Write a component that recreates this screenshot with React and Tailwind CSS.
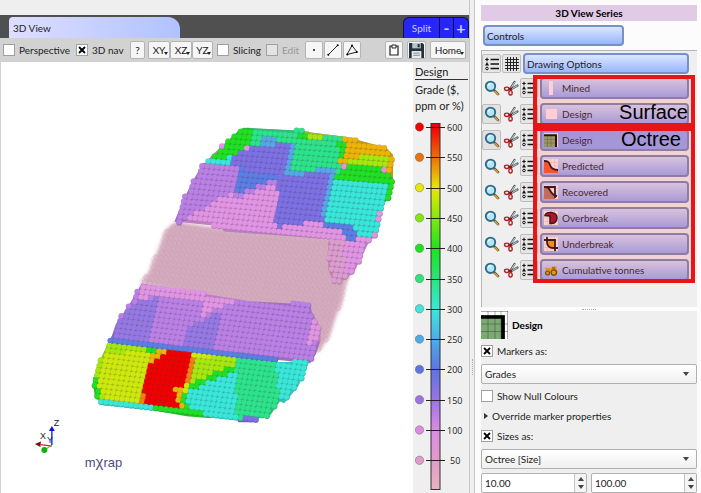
import React, { useState } from 'react';

const COLORS = {
    red: '#f00000',
    orange: '#f08010',
    gold: '#ecb408',
    yellow: '#cde80c',
    lime: '#a6e80e',
    green: '#20e024',
    mint: '#2ce38c',
    teal: '#38e6da',
    sky: '#56a6e8',
    blue: '#5c7ee4',
    indigo: '#7d70e4',
    violet: '#9678e4',
    purple: '#ba80e6',
    pink: '#e294e4',
    rose: '#dc9ccf',
};

// Painted in order: the last region that holds a marker gives its colour
const REGIONS = [
    // upper block
    ['pink', [[174, 222], [183, 200], [193, 180], [205, 163], [212, 155], [228, 140], [243, 128], [297, 131], [345, 137], [386, 148], [392, 155], [393, 178], [388, 198], [381, 206], [378, 224], [376, 236], [369, 242], [322, 239], [223, 232], [222, 227]]],
    ['rose', [[328, 242], [357, 240], [370, 240], [365, 250], [354, 272], [345, 280], [334, 284], [328, 270]]],
    ['pink', [[345, 240], [370, 240], [365, 250], [354, 272], [345, 277]]],
    ['purple', [[203, 163], [238, 167], [233, 193], [215, 200], [205, 208], [180, 224], [174, 222], [183, 200], [193, 180]]],
    ['purple', [[235, 180], [278, 176], [276, 185], [245, 196], [232, 198]]],
    ['indigo', [[223, 163], [253, 145], [277, 140], [293, 143], [285, 174], [250, 171], [223, 166]]],
    ['blue', [[237, 169], [277, 174], [276, 180], [250, 188], [235, 195]]],
    ['indigo', [[278, 177], [307, 171], [334, 172], [323, 223], [292, 224], [275, 232]]],
    ['mint', [[247, 128], [303, 131], [302, 143], [272, 141], [254, 146], [247, 146]]],
    ['sky', [[262, 139], [277, 140], [275, 145], [255, 149]]],
    ['mint', [[297, 132], [343, 138], [341, 173], [286, 172], [294, 143]]],
    ['sky', [[290, 142], [296, 143], [290, 173], [283, 173]]],
    ['sky', [[283, 169], [306, 170], [306, 176], [283, 175]]],
    ['sky', [[316, 166], [338, 167], [338, 180], [328, 222], [322, 222], [330, 174], [316, 172]]],
    ['teal', [[206, 161], [222, 154], [235, 154], [230, 164], [210, 167]]],
    ['green', [[247, 128], [253, 130], [250, 143], [238, 154], [213, 161], [212, 158], [228, 141], [240, 129]]],
    ['green', [[298, 131], [309, 132], [306, 142], [300, 139]]],
    ['lime', [[303, 132], [345, 137], [350, 140], [306, 137]]],
    ['gold', [[345, 137], [386, 148], [393, 155], [393, 178], [386, 178], [384, 164], [370, 160], [340, 168], [341, 146]]],
    ['green', [[339, 142], [346, 141], [342, 158], [337, 156]]],
    ['lime', [[349, 161], [366, 156], [388, 158], [388, 166], [350, 167]]],
    ['green', [[335, 180], [340, 169], [362, 163], [380, 166], [386, 174], [393, 178], [389, 198], [382, 206], [384, 182]]],
    ['teal', [[335, 179], [388, 182], [383, 200], [378, 220], [376, 234], [362, 241], [352, 224], [326, 221]]],
    ['blue', [[325, 222], [350, 224], [358, 239], [347, 241], [344, 231], [325, 228]]],
    // lower purple block
    ['purple', [[141, 284], [168, 290], [250, 302], [310, 305], [314, 324], [320, 328], [320, 342], [316, 354], [310, 364], [109, 343], [115, 325], [128, 306]]],
    ['pink', [[141, 284], [245, 301], [215, 309], [203, 319], [203, 305], [165, 297], [150, 298], [135, 302]]],
    ['violet', [[132, 305], [160, 298], [150, 345], [109, 341], [117, 325]]],
    ['violet', [[186, 330], [222, 312], [215, 350], [184, 346]]],
    ['pink', [[312, 312], [320, 328], [320, 342], [309, 346]]],
    ['blue', [[110, 339], [152, 343], [192, 349], [275, 357], [276, 363], [225, 360], [160, 352], [108, 346]]],
    // toe of the block
    ['yellow', [[107, 345], [153, 350], [196, 356], [240, 361], [240, 380], [190, 415], [150, 409], [105, 405], [96, 400], [93, 390], [95, 370]]],
    ['lime', [[107, 345], [153, 350], [150, 356], [107, 352], [100, 366], [97, 385], [104, 399], [145, 404], [145, 409], [105, 406], [95, 396], [96, 368]]],
    ['green', [[92, 378], [97, 378], [99, 401], [94, 397]]],
    ['gold', [[150, 350], [168, 351], [160, 361], [148, 363]]],
    ['green', [[148, 350], [155, 351], [152, 357], [147, 356]]],
    ['orange', [[147, 362], [153, 362], [148, 408], [140, 406]]],
    ['red', [[165, 351], [192, 355], [189, 378], [182, 386], [174, 391], [178, 404], [189, 414], [146, 406], [143, 394], [149, 366], [162, 358]]],
    ['orange', [[190, 356], [197, 357], [192, 382], [182, 390], [185, 376]]],
    ['gold', [[173, 391], [184, 387], [183, 402], [187, 414], [178, 407]]],
    ['lime', [[196, 357], [240, 361], [234, 370], [210, 380], [188, 390]]],
    ['teal', [[240, 366], [208, 377], [187, 390], [185, 410], [195, 417], [237, 421], [242, 400]]],
    ['green', [[240, 363], [238, 371], [212, 382], [188, 392], [187, 386], [213, 375]]],
    ['green', [[184, 393], [189, 390], [187, 410], [182, 404]]],
    ['mint', [[238, 360], [277, 364], [281, 400], [270, 416], [252, 421], [236, 421], [236, 372]]],
    ['teal', [[276, 363], [309, 362], [298, 387], [284, 404], [279, 402]]],
    ['teal', [[98, 402], [152, 407], [152, 411], [102, 406]]],
    ['green', [[152, 408], [188, 412], [211, 416], [210, 419], [186, 417], [152, 411]]],
    ['indigo', [[236, 419], [258, 419], [254, 423], [238, 423]]],
];

const MIST = [[166, 230], [176, 222], [223, 230], [330, 238], [350, 243], [352, 272], [345, 284], [342, 300], [328, 338], [317, 354], [308, 308], [250, 306], [140, 284], [149, 272]];

function inside(px, py, pts) {
    let hit = false;
    for (let i = 0, j = pts.length - 1; i < pts.length; j = i++) {
        const [xi, yi] = pts[i];
        const [xj, yj] = pts[j];
        if (yi > py !== yj > py && px < ((xj - xi) * (py - yi)) / (yj - yi) + xi) hit = !hit;
    }
    return hit;
}

const toPoints = (pts) => pts.map((p) => p.join(',')).join(' ');

const MARKERS = [];
const MIST_MARKERS = [];
for (let row = 0; row < 76; row++) {
    const slope = 0.07 + 0.045 * Math.min(1, row / 40);
    for (let col = 0; col < 110; col++) {
        const x = 80 + col * 5 - row * 1.2;
        const y = 100 + row * 5.2 + (x - 90) * slope;
        let color = null;
        REGIONS.forEach(([name, pts]) => {
            if (inside(x, y, pts)) color = name;
        });
        if (color) MARKERS.push({ x, y, color });
        if (inside(x, y, MIST)) MIST_MARKERS.push({ x, y });
    }
}

const LEGEND = [
    [600, '#ee0505'],
    [550, '#ee7008'],
    [500, '#e8e808'],
    [450, '#84e80c'],
    [400, '#1ce41c'],
    [350, '#2ae47c'],
    [300, '#3ce8dc'],
    [250, '#4cace8'],
    [200, '#5c74e4'],
    [150, '#9c74e4'],
    [100, '#dc8ce4'],
    [50, '#e09cc8'],
];

const SURFACES = [
    { name: 'Mined', icon: 'bar' },
    { name: 'Design', icon: 'square', zoomed: true },
];

const OCTREES = [
    { name: 'Design', icon: 'design', zoomed: true, active: true },
    { name: 'Predicted', icon: 'predicted' },
    { name: 'Recovered', icon: 'recovered' },
    { name: 'Overbreak', icon: 'overbreak' },
    { name: 'Underbreak', icon: 'underbreak' },
    { name: 'Cumulative tonnes', icon: 'truck' },
];

function Check({ label, checked = false, disabled = false, className = '' }) {
    const [on, setOn] = useState(checked);
    return (
        <label className={`flex items-center gap-1 whitespace-nowrap ${disabled ? 'text-[#999999]' : ''} ${className}`}>
            <span className="relative block h-3 w-3 shrink-0">
                <input
                    type="checkbox"
                    checked={on}
                    disabled={disabled}
                    onChange={() => setOn(!on)}
                    className="block h-3 w-3 appearance-none border border-[#a0a0a0] bg-white disabled:bg-[#e4e4e4]"
                />
                {on && (
                    <svg viewBox="0 0 12 12" className="pointer-events-none absolute inset-0 h-3 w-3">
                        <path d="M3 3l6 6M9 3l-6 6" stroke="#000" strokeWidth="1.8" />
                    </svg>
                )}
            </span>
            <span>{label}</span>
        </label>
    );
}

function ToolButton({ children, label, className = '' }) {
    return (
        <button
            type="button"
            aria-label={label}
            className={`relative flex h-[18px] shrink-0 items-center justify-center rounded-xs border border-[#b4b4b4] bg-[#f6f6f6] ${className}`}
        >
            {children}
        </button>
    );
}

function Caret() {
    return (
        <svg viewBox="0 0 4 3" className="absolute right-[1px] bottom-[3px] h-[3px] w-1">
            <path d="M0 0h4L2 3z" fill="#222" />
        </svg>
    );
}

function ListIcon() {
    return (
        <svg viewBox="0 0 14 14" className="h-[14px] w-[14px] shrink-0">
            <path d="M5.5 2.5H14M5.5 7H14M5.5 11.5H14" stroke="#111" strokeWidth="1.4" />
            <path d="M2 .8v3.4M.3 2.5h3.4" stroke="#111" strokeWidth="1.1" />
            <path d="M2 5l2 3.5H0z" fill="#111" />
            <circle cx="2" cy="11.5" r="1.3" fill="none" stroke="#111" />
        </svg>
    );
}

function Magnifier() {
    return (
        <svg viewBox="0 0 16 16" className="h-4 w-4">
            <path d="M10 10.2l4 4" stroke="#5d4a1e" strokeWidth="2.6" strokeLinecap="round" />
            <path d="M11 11.2l3 3" stroke="#dba445" strokeWidth="1.5" strokeLinecap="round" />
            <circle cx="6.5" cy="6.3" r="4.7" fill="#b5e6f5" stroke="#2d6a8c" strokeWidth="1.9" />
            <path d="M4 5.5a3 3 0 0 1 3-2" stroke="#fff" strokeWidth="1.2" fill="none" />
        </svg>
    );
}

function Scissors() {
    return (
        <svg viewBox="0 0 16 16" className="h-4 w-4">
            <path d="M7 9l4.500-7M7.500 9.500L14.500 5.500" stroke="#4b5960" strokeWidth="2.2" strokeLinecap="round" />
            <path d="M8 8l3.500-5.600M8.500 9L14 5.800" stroke="#c6d0d4" strokeWidth="1" strokeLinecap="round" />
            <ellipse cx="3.8" cy="8.8" rx="2.3" ry="1.7" fill="none" stroke="#b02024" strokeWidth="1.4" />
            <ellipse cx="7.5" cy="12.8" rx="1.7" ry="2.2" fill="none" stroke="#b02024" strokeWidth="1.4" />
            <path d="M5.5 9.3l2.8-.8-.6 2" stroke="#8a1619" strokeWidth="1.6" fill="none" />
        </svg>
    );
}

function SeriesIcon({ kind }) {
    if (kind === 'bar') {
        return (
            <svg viewBox="0 0 14 14" className="h-[14px] w-[14px]">
                <path d="M5 0h4v14H5z" fill="#ffe9f2" />
            </svg>
        );
    }
    if (kind === 'square') {
        return (
            <svg viewBox="0 0 14 14" className="h-[14px] w-[14px]">
                <path d="M2 2h11v10H2z" fill="#ffe9f2" />
            </svg>
        );
    }
    if (kind === 'truck') {
        return (
            <svg viewBox="0 0 14 14" className="h-[14px] w-[14px]">
                <path d="M1 4.500l6 1 1-2h4.500v3.500l1 1v2H3z" fill="#e3a300" />
                <path d="M8 5h3" stroke="#5a4420" strokeWidth="1" />
                <circle cx="3.5" cy="10" r="2" fill="#e3a300" stroke="#604010" strokeWidth="1.2" />
                <circle cx="9.8" cy="9.6" r="2.7" fill="#e3a300" stroke="#604010" strokeWidth="1.2" />
            </svg>
        );
    }
    return (
        <svg viewBox="0 0 14 14" className="h-[14px] w-[14px]">
            <path d="M0 0h14v14H0z" fill="#fff0e8" />
            <path d="M3.5 0v14M7 0v14M10.5 0v14M0 3.5h14M0 7h14M0 10.5h14" stroke="#e5c5c0" strokeWidth=".5" />
            {kind === 'design' && (
                <>
                    <path d="M0 3h11v11H0z" fill="#86a86a" />
                    <path d="M3.5 3v11M7 3v11M0 6.5h11M0 10h11" stroke="#4d6d40" strokeWidth=".6" />
                    <path d="M0 2.3h12V14" stroke="#000" strokeWidth="2" fill="none" />
                </>
            )}
            {kind === 'predicted' && (
                <>
                    <path d="M0 2c4 0 5 1 6 4s4 5 8 5v3H0z" fill="#ff5522" />
                    <path d="M0 2c4 0 5 1 6 4s4 5 8 5" stroke="#111" strokeWidth="1.8" fill="none" />
                </>
            )}
            {kind === 'recovered' && (
                <>
                    <path d="M0 2h3c2 0 2 2 3 4s2 4 5 5v3H0z" fill="#c07058" />
                    <path d="M0 2h11v11M2 2c5 0 3 8 11 9" stroke="#111" strokeWidth="1.8" fill="none" />
                </>
            )}
            {kind === 'overbreak' && (
                <path d="M1 4.500C2 0 13 0 13 7c0 4-3 6-7 5.500V5z" fill="#a40828" stroke="#111" strokeWidth="1.5" />
            )}
            {kind === 'underbreak' && (
                <>
                    <path d="M3 3h8v8H7L3 7z" fill="#f09a18" />
                    <path d="M0 3h11v11M3 0v5c0 4 3 6 6 6h5" stroke="#111" strokeWidth="1.8" fill="none" />
                </>
            )}
        </svg>
    );
}

function SeriesRow({ item }) {
    return (
        <div className="flex h-[26px] items-center pr-2">
            <button
                type="button"
                aria-label={`Zoom to ${item.name}`}
                className={`flex h-5 w-[19px] shrink-0 items-center justify-center rounded-xs border ${item.zoomed ? 'border-[#bcbcbc] bg-[#e2e2e2]' : 'border-transparent'}`}
            >
                <Magnifier />
            </button>
            <button type="button" aria-label={`Clip ${item.name}`} className="flex h-5 w-[19px] shrink-0 items-center justify-center">
                <Scissors />
            </button>
            <button
                type="button"
                aria-label={`Legend of ${item.name}`}
                className="mr-[2px] flex h-5 w-[18px] shrink-0 items-center justify-center rounded-xs border border-[#bcbcbc] bg-[#e6e6e6]"
            >
                <ListIcon />
            </button>
            <button
                type="button"
                className={`flex h-[22px] min-w-0 flex-1 items-center gap-1 rounded-sm border-2 border-[#7788b4] pl-[2px] ${item.active ? 'bg-[#90a8f6]' : 'bg-linear-to-b from-[#d2dcfa] to-[#96acf6]'}`}
            >
                <SeriesIcon kind={item.icon} />
                <span className="whitespace-nowrap">{item.name}</span>
            </button>
        </div>
    );
}

function SeriesGroup({ items, note }) {
    return (
        <div className="relative">
            {items.map((item) => (
                <SeriesRow key={item.name} item={item} />
            ))}
            <div className="pointer-events-none absolute inset-y-0 right-[2px] left-[51px] border-4 border-[#e81418] bg-[#ff5050]/18"></div>
            {note}
        </div>
    );
}

function Combo({ label, options }) {
    return (
        <div className="relative">
            <select aria-label={label} className="block h-5 w-full appearance-none rounded-xs border border-[#b0b0b0] bg-linear-to-b from-white to-[#f0f0f0] pl-[3px]">
                {options.map((o) => (
                    <option key={o}>{o}</option>
                ))}
            </select>
            <svg viewBox="0 0 6 4" className="pointer-events-none absolute top-2 right-2 h-1 w-[6px]">
                <path d="M0 0h6L3 4z" fill="#444" />
            </svg>
        </div>
    );
}

function Spin({ label, value }) {
    const [text, setText] = useState(value);
    const step = (d) => setText((Number(text) + d).toFixed(2));
    return (
        <div className="flex h-5 min-w-0 flex-1 rounded-xs border border-[#b0b0b0] bg-white">
            <input aria-label={label} value={text} onChange={(e) => setText(e.target.value)} className="min-w-0 flex-1 pl-[3px] outline-none" />
            <div className="flex w-3 shrink-0 flex-col items-center justify-center gap-1 border-l border-[#c4c4c4] bg-[#f4f4f4]">
                <button type="button" aria-label={`${label} up`} onClick={() => step(1)}>
                    <svg viewBox="0 0 6 4" className="block h-1 w-[6px]"><path d="M0 4h6L3 0z" fill="#444" /></svg>
                </button>
                <button type="button" aria-label={`${label} down`} onClick={() => step(-1)}>
                    <svg viewBox="0 0 6 4" className="block h-1 w-[6px]"><path d="M0 0h6L3 4z" fill="#444" /></svg>
                </button>
            </div>
        </div>
    );
}

function Scene() {
    return (
        <svg viewBox="0 62 413 431" preserveAspectRatio="xMinYMin meet" className="block h-full w-full">
            <defs>
                {Object.entries(COLORS).map(([name, color]) => (
                    <radialGradient key={name} id={`ball-${name}`} cx="0.45" cy="0.4" r="0.6">
                        <stop offset="0" stopColor={color} />
                        <stop offset="0.6" stopColor={color} />
                        <stop offset="1" stopColor={`color-mix(in srgb, ${color} 68%, #303030)`} />
                    </radialGradient>
                ))}
                <filter id="haze" x="-10%" y="-10%" width="120%" height="120%">
                    <feGaussianBlur stdDeviation="2" />
                </filter>
            </defs>
            <polygon points={toPoints(MIST)} fill="#d2a8bc" filter="url(#haze)" />
            {MIST_MARKERS.map((m, i) => (
                <g key={i}>
                    <ellipse cx={m.x} cy={m.y} rx="7" ry="2.6" fill="#dbb2c6" opacity="0.26" transform={`rotate(-38 ${m.x} ${m.y})`} />
                    <circle cx={m.x} cy={m.y} r="2.5" fill="#d6acbe" stroke="#b48a9c" strokeWidth="0.7" opacity="0.3" />
                </g>
            ))}
            {/* Darker ground that shows between the markers */}
            {REGIONS.map(([name, pts], i) => (
                <polygon key={i} points={toPoints(pts)} fill={`color-mix(in srgb, ${COLORS[name]} 80%, #303030)`} />
            ))}
            {MARKERS.map((m, i) => (
                <circle key={i} cx={m.x} cy={m.y} r="3.1" fill={`url(#ball-${m.color})`} />
            ))}

            {/* Axes */}
            <path d="M51 446V432" stroke="#1c1ce0" strokeWidth="1.4" />
            <path d="M48 432l3-5 3 5z" fill="#1414c8" />
            <path d="M51 447l-11-1.5" stroke="#f02020" strokeWidth="1.2" />
            <path d="M40 442.500l-6 2.500 5.500 3z" fill="#701010" />
            <path d="M51 446l-6 4" stroke="#20c020" />
            <circle cx="43.500" cy="451" r="3" fill="#10b010" />
            <g fontFamily="Liberation Sans, sans-serif" fontSize="9" fill="#222">
                <text x="53" y="427">Z</text>
                <text x="39" y="440">X</text>
                <text x="46" y="444">Y</text>
            </g>
            <text x="84" y="468" fontFamily="Liberation Sans, sans-serif" fontSize="13" fill="#4c4c82">
                m<tspan fontSize="15">χ</tspan>rap
            </text>
        </svg>
    );
}

function Legend() {
    return (
        <aside className="w-14 shrink-0 bg-[#efefef] pt-[3px] pl-[2px] text-[11px]">
            <h2 className="mr-[1px] border-b border-[#333333] leading-[14px]">Design</h2>
            <p className="pt-[2px] leading-4 whitespace-nowrap">
                Grade ($,
                <br />
                ppm or %)
            </p>
            <svg viewBox="415 117 54 376" className="mt-[3px] block h-[376px] w-[54px]">
                <defs>
                    <linearGradient id="scale" x1="0" y1="0" x2="0" y2="1">
                        {LEGEND.map(([value, color], i) => (
                            <stop key={value} offset={(i * 30.3 + 4) / 366} stopColor={color} />
                        ))}
                        <stop offset="1" stopColor="#e8b4c0" />
                    </linearGradient>
                </defs>
                <rect x="431" y="123.500" width="9" height="366" fill="url(#scale)" stroke="#333" />
                {LEGEND.map(([value, color], i) => (
                    <g key={value}>
                        <circle cx="419.500" cy={127 + i * 30.3} r="4.200" fill={color} stroke="#555" strokeOpacity="0.4" />
                        <path d={`M426 ${Math.round(127 + i * 30.3) + 0.5}h19`} stroke="#222" />
                        <text x={value < 100 ? 450 : 447} y={131 + i * 30.3} fontSize="9" fontFamily="Open Sans" fill="#222">
                            {value}
                        </text>
                    </g>
                ))}
            </svg>
        </aside>
    );
}

export default function App() {
    return (
        <div className="flex min-h-screen bg-[#efefef] font-['Lato','Open_Sans',sans-serif] text-[10px] leading-[14px] text-[#222222]">
            <main className="flex min-w-0 flex-1 flex-col pt-[15px]">
                <div className="flex h-[23px] shrink-0 items-end bg-[#505050]">
                    <div className="ml-[9px] flex h-[21px] w-[171px] items-center rounded-tl-sm rounded-tr-xl bg-linear-to-r from-[#dedeff] to-[#b0c2ff] pl-1">3D View</div>
                    <div className="ml-auto flex h-[21px] divide-x divide-[#111144] overflow-hidden rounded-t-md border border-b-0 border-[#111144] bg-[#2626f8] text-[#c8d0ff]">
                        <button type="button" className="w-9">Split</button>
                        <button type="button" className="w-[14px] text-base leading-4 font-bold">-</button>
                        <button type="button" className="w-[14px] text-base leading-4 font-bold">+</button>
                    </div>
                </div>

                <div className="flex h-6 shrink-0 items-center bg-[#d2d2d2] pr-[3px] pl-[3px]">
                    <Check label="Perspective" className="w-[73px]" />
                    <Check label="3D nav" checked className="w-[54px]" />
                    <ToolButton label="Help" className="mr-[3px] w-[15px]">?</ToolButton>
                    <ToolButton className="w-[22px]">XY<Caret /></ToolButton>
                    <ToolButton className="w-[22px]">XZ<Caret /></ToolButton>
                    <ToolButton className="mr-1 w-[21px]">YZ<Caret /></ToolButton>
                    <Check label="Slicing" className="w-[49px]" />
                    <Check label="Edit" disabled className="w-[39px]" />
                    <ToolButton label="Point" className="w-[18px]">
                        <svg viewBox="0 0 12 12" className="h-3 w-3"><circle cx="6" cy="6" r="1" fill="#111" /></svg>
                    </ToolButton>
                    <ToolButton label="Line" className="ml-[1px] w-[18px]">
                        <svg viewBox="0 0 12 12" className="h-3 w-3">
                            <path d="M1 11L11 1" stroke="#222" />
                            <circle cx="1.300" cy="10.700" r="1" />
                            <circle cx="10.700" cy="1.300" r="1" />
                        </svg>
                    </ToolButton>
                    <ToolButton label="Polygon" className="ml-[1px] w-[18px]">
                        <svg viewBox="0 0 12 12" className="h-3 w-3">
                            <path d="M1 10.500L6 1.500l5 6.500z" fill="none" stroke="#222" />
                            <circle cx="1.300" cy="10.500" r="1" />
                            <circle cx="6" cy="1.500" r="1" />
                            <circle cx="10.800" cy="8" r="1" />
                        </svg>
                    </ToolButton>
                    <ToolButton label="Paste" className="ml-auto w-[18px]">
                        <svg viewBox="0 0 12 12" className="h-3 w-3">
                            <path d="M2 2h8v9H2z" fill="#fff" stroke="#222" strokeWidth="1.200" />
                            <path d="M4 1h4v3H4z" fill="#fff" stroke="#222" />
                        </svg>
                    </ToolButton>
                    <ToolButton label="Save" className="ml-1 w-[19px]">
                        <svg viewBox="0 0 14 14" className="h-[15px] w-[15px]">
                            <path d="M0 0h12.500L14 1.500V14H0z" fill="#25313c" />
                            <path d="M3 0h8v5H3z" fill="#b8c4cc" />
                            <path d="M8 1h2v3H8z" fill="#25313c" />
                            <path d="M2.500 7.500h9V14h-9z" fill="#e8ecee" />
                            <path d="M4 9.500h6M4 11.500h6" stroke="#778" strokeWidth=".8" />
                        </svg>
                    </ToolButton>
                    <ToolButton className="ml-1 w-9">Home<Caret /></ToolButton>
                </div>

                <div className="flex flex-1">
                    <div className="min-w-0 flex-1 border-l border-[#d0d0d0] bg-white">
                        <Scene />
                    </div>
                    <Legend />
                </div>
            </main>

            <div className="flex w-[6px] shrink-0 items-center justify-center border-r border-l border-[#c8c8c8] bg-[#efefef]">
                <span className="mt-60 h-4 border-l border-dotted border-[#aaaaaa]"></span>
            </div>

            <section className="flex w-[226px] shrink-0 flex-col bg-[#fcfcfc] pt-[5px] pr-1 pl-[6px]">
                <h1 className="h-4 bg-[#e1cae5] text-center leading-4 font-bold text-black">3D View Series</h1>
                <button type="button" className="mt-1 ml-[2px] h-[21px] w-[141px] rounded-sm border-2 border-[#7890c4] bg-linear-to-b from-[#dce6ff] to-[#98b6fc] pl-[2px] text-left leading-4">
                    Controls
                </button>

                <div className="mt-1 h-[257px] border-t border-l border-[#b4b4b4] bg-[#efefef]">
                    <div className="flex h-6 items-center pt-px pr-2">
                        <button type="button" aria-label="Show legends" className="mr-[1px] flex h-[19px] w-[19px] items-center justify-center rounded-xs border border-[#bcbcbc] bg-[#e6e6e6]">
                            <ListIcon />
                        </button>
                        <button type="button" aria-label="Show grid" className="mr-[2px] flex h-[19px] w-[19px] items-center justify-center rounded-xs border border-[#bcbcbc] bg-[#e6e6e6]">
                            <svg viewBox="0 0 14 14" className="h-[14px] w-[14px]">
                                <path d="M2.500 0v14M5.500 0v14M8.500 0v14M11.500 0v14M0 2.500h14M0 5.500h14M0 8.500h14M0 11.500h14" stroke="#222" />
                            </svg>
                        </button>
                        <button type="button" className="h-[21px] flex-1 rounded-sm border-2 border-[#7890c4] bg-linear-to-b from-[#dce6ff] to-[#98b6fc] pl-[2px] text-left leading-4">
                            Drawing Options
                        </button>
                    </div>
                    <SeriesGroup
                        items={SURFACES}
                        note={<p className="absolute right-[9px] bottom-[5px] font-['Liberation_Sans',sans-serif] text-xl leading-5 text-black">Surface</p>}
                    />
                    <SeriesGroup
                        items={OCTREES}
                        note={<p className="absolute top-[2px] right-[16px] font-['Liberation_Sans',sans-serif] text-xl leading-5 text-black">Octree</p>}
                    />
                </div>

                <div className="flex h-1 items-center justify-center">
                    <span className="w-[14px] border-t border-dotted border-[#aaaaaa]"></span>
                </div>

                <div className="flex flex-1 flex-col bg-[#efefef]">
                    <div className="flex items-center gap-1">
                        <svg viewBox="0 0 27 28" className="h-7 w-[27px]">
                            <path d="M0 0h27v28H0z" fill="#fff" />
                            <path d="M0 4h24v24H0z" fill="#7bab72" />
                            <path d="M7 0v28M14 0v28M20 0v28M26.500 0v28M0 .5h27M0 13h27M0 20.500h27" stroke="#333" strokeOpacity=".5" strokeWidth=".8" />
                            <path d="M0 6h22v22" fill="none" stroke="#000" strokeWidth="3.600" />
                        </svg>
                        <h2 className="font-bold text-black">Design</h2>
                    </div>
                    <Check label="Markers as:" checked className="mt-1 h-4" />
                    <div className="mt-[5px]"><Combo label="Markers as" options={['Grades']} /></div>
                    <Check label="Show Null Colours" className="mt-1 h-4" />
                    <button type="button" className="mt-1 flex h-4 items-center gap-1 pl-[3px] text-left">
                        <svg viewBox="0 0 4 6" className="h-[6px] w-1"><path d="M0 0v6l4-3z" fill="#333" /></svg>
                        Override marker properties
                    </button>
                    <Check label="Sizes as:" checked className="mt-1 h-4" />
                    <div className="mt-[5px]"><Combo label="Sizes as" options={['Octree [Size]']} /></div>
                    <div className="mt-1 flex gap-1">
                        <Spin label="Smallest size" value="10.00" />
                        <Spin label="Largest size" value="100.00" />
                    </div>
                </div>
            </section>
        </div>
    );
}
